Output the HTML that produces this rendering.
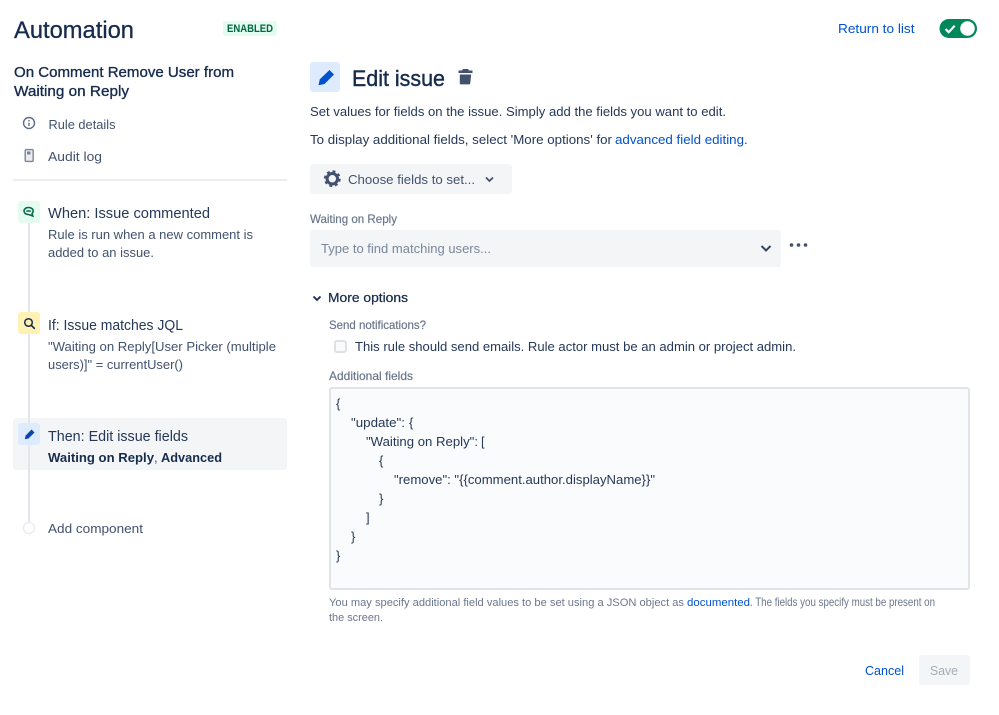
<!DOCTYPE html>
<html lang="en"><head><meta charset="utf-8"><title>Automation</title>
<style>
html,body{margin:0;padding:0;background:#fff}
svg{display:block}
text{font-family:"Liberation Sans",sans-serif;font-size:13px;fill:#253858;white-space:pre}
.h{fill:#172B4D}
.s{stroke:#172B4D;stroke-width:.35px}
.n{fill:#42526E}
.l{font-size:12px;fill:#6B778C;stroke:#6B778C;stroke-width:.2px}
.t{font-size:15px;fill:#253858}
.a{fill:#0052CC}
.c{fill:#253858}
.f{font-size:11px;fill:#6B778C}
</style></head>
<body>
<svg xmlns="http://www.w3.org/2000/svg" width="999" height="715" viewBox="0 0 999 715">
<rect width="999" height="715" fill="#fff"/>

<!-- Header -->
<text x="14" y="38" class="h" style="font-size:24px;stroke:#172B4D;stroke-width:.3px" textLength="120" lengthAdjust="spacingAndGlyphs">Automation</text>
<rect x="223" y="21" width="54" height="15" rx="3" fill="#E3FCEF"/>
<text x="227" y="32" style="font-size:11px;font-weight:bold;fill:#006644" textLength="46" lengthAdjust="spacingAndGlyphs">ENABLED</text>
<text x="14" y="77" class="h s" style="font-size:15px" textLength="220" lengthAdjust="spacingAndGlyphs">On Comment Remove User from</text>
<text x="14" y="96" class="h s" style="font-size:15px" textLength="115" lengthAdjust="spacingAndGlyphs">Waiting on Reply</text>

<!-- Sidebar links -->
<circle cx="29" cy="123" r="5.500" fill="none" stroke="#5E6C84" stroke-width="1.400"/>
<rect x="28.300" y="122.700" width="1.400" height="3.300" fill="#5E6C84"/><rect x="28.300" y="120" width="1.400" height="1.400" fill="#5E6C84"/>
<rect x="25.200" y="149.600" width="8" height="11.800" rx="1.200" fill="#EBECF0" stroke="#7A869A" stroke-width="1.400"/><rect x="27" y="151.500" width="3.500" height="3" fill="#7A869A"/>
<text x="48.500" y="129" class="n" textLength="67" lengthAdjust="spacingAndGlyphs">Rule details</text>
<text x="48" y="161" class="n" textLength="54" lengthAdjust="spacingAndGlyphs">Audit log</text>
<rect x="13" y="179" width="274" height="2" fill="#EBECF0"/>

<!-- Timeline -->
<rect x="13" y="418" width="274" height="52" rx="3" fill="#F4F5F7"/>
<rect x="28" y="223" width="2" height="300" fill="#E4E6EC"/>

<rect x="18" y="201" width="22" height="22" rx="3" fill="#E3FCEF"/>
<path d="M28.500 207.500c-2.700 0-4.500 1.500-4.500 3.500 0 2 1.800 3.500 4.500 3.500l4.300 1.500-.8-2.500c.8-.6 1.200-1.500 1.200-2.500 0-2-2-3.500-4.700-3.500z" fill="none" stroke="#006644" stroke-width="1.500"/>
<rect x="26.300" y="210.300" width="4.500" height="1.500" fill="#006644"/>
<text x="48" y="218" class="t" textLength="162" lengthAdjust="spacingAndGlyphs">When: Issue commented</text>
<text x="48" y="239" class="n" textLength="205" lengthAdjust="spacingAndGlyphs">Rule is run when a new comment is</text>
<text x="48" y="257" class="n" textLength="106" lengthAdjust="spacingAndGlyphs">added to an issue.</text>

<rect x="18" y="312" width="22" height="22" rx="3" fill="#FFF0B3"/>
<circle cx="28.500" cy="322.500" r="3.800" fill="none" stroke="#172B4D" stroke-width="1.500"/>
<path d="M31.300 325.300l3 3" stroke="#172B4D" stroke-width="1.700" stroke-linecap="round"/>
<text x="48" y="330" class="t" textLength="135" lengthAdjust="spacingAndGlyphs">If: Issue matches JQL</text>
<text x="48" y="351" class="n" textLength="228" lengthAdjust="spacingAndGlyphs">"Waiting on Reply[User Picker (multiple</text>
<text x="48" y="369" class="n" textLength="135" lengthAdjust="spacingAndGlyphs">users)]" = currentUser()</text>

<rect x="18" y="423" width="22" height="22" rx="3" fill="#DEEBFF"/>
<path d="M31.500 429.500l3 3-6 6-3.700.8.800-3.700z" fill="#0747A6"/>
<text x="48" y="441" class="t" textLength="140" lengthAdjust="spacingAndGlyphs">Then: Edit issue fields</text>
<text x="48" y="462" style="font-weight:bold;fill:#172B4D" textLength="106" lengthAdjust="spacingAndGlyphs">Waiting on Reply</text>
<text x="154" y="462" class="n">,</text>
<text x="161" y="462" style="font-weight:bold;fill:#172B4D" textLength="61" lengthAdjust="spacingAndGlyphs">Advanced</text>

<circle cx="29" cy="528" r="5.500" fill="#fff" stroke="#EBECF0" stroke-width="1.500"/>
<text x="48" y="533" class="n" textLength="95" lengthAdjust="spacingAndGlyphs">Add component</text>

<!-- Top right -->
<text x="838" y="33" class="a" textLength="76.500" lengthAdjust="spacingAndGlyphs">Return to list</text>
<rect x="939.500" y="19" width="37.500" height="19" rx="9.500" fill="#00875A"/>
<circle cx="967.500" cy="28.500" r="7.300" fill="#fff"/>
<path d="M945.500 29l3.200 3.200 6-6.500" fill="none" stroke="#fff" stroke-width="2.200"/>

<!-- Main heading -->
<rect x="310" y="62" width="30" height="30" rx="3" fill="#DEEBFF"/>
<path d="M329.500 70l4.500 4.500-9.500 9.500-6 1.300 1.300-6z" fill="#0052CC"/>
<text x="352" y="86" class="h" style="font-size:22px;stroke:#172B4D;stroke-width:.4px" textLength="93" lengthAdjust="spacingAndGlyphs">Edit issue</text>
<path d="M458.500 70.500h3.500l1-1.500h5l1 1.500h3.500v2.500h-14zM459.800 74.500h11.400l-1 9c-.1.600-.5.900-1 .9h-8.400c-.5 0-.9-.3-1-.9z" fill="#42526E"/>

<text x="310" y="116" class="c" textLength="416" lengthAdjust="spacingAndGlyphs">Set values for fields on the issue. Simply add the fields you want to edit.</text>
<text x="310" y="144" class="c" textLength="302" lengthAdjust="spacingAndGlyphs">To display additional fields, select 'More options' for</text>
<text x="615" y="144" class="a" textLength="129" lengthAdjust="spacingAndGlyphs">advanced field editing</text>
<text x="744" y="144" class="c">.</text>

<!-- Choose fields -->
<rect x="310" y="164" width="202" height="30" rx="3" fill="#F4F5F7"/>
<g transform="translate(332.300 178.700)" fill="none" stroke="#42526E">
<circle r="5.200" stroke-width="3"/>
<circle r="7.300" stroke-width="2.200" stroke-dasharray="2.900 2.830"/>
</g>
<text x="348" y="184" class="n" textLength="127" lengthAdjust="spacingAndGlyphs">Choose fields to set...</text>
<path d="M486 177.500l3.500 3.500 3.500-3.500" fill="none" stroke="#42526E" stroke-width="1.800"/>

<!-- Waiting on Reply -->
<text x="310" y="223" class="l" textLength="87" lengthAdjust="spacingAndGlyphs">Waiting on Reply</text>
<rect x="310" y="230" width="471" height="37" rx="3" fill="#F4F5F7"/>
<text x="321" y="253" style="fill:#7A869A" textLength="170" lengthAdjust="spacingAndGlyphs">Type to find matching users...</text>
<path d="M761.500 246l4.500 4.500 4.500-4.500" fill="none" stroke="#344563" stroke-width="2"/>
<circle cx="791.500" cy="245" r="1.800" fill="#42526E"/><circle cx="798.500" cy="245" r="1.800" fill="#42526E"/><circle cx="805.500" cy="245" r="1.800" fill="#42526E"/>

<!-- More options -->
<path d="M313.500 296.500l3.500 3.500 3.500-3.500" fill="none" stroke="#172B4D" stroke-width="1.800"/>
<text x="328" y="302" class="h s" style="stroke-width:.25px" textLength="80" lengthAdjust="spacingAndGlyphs">More options</text>
<text x="329" y="329" class="l" textLength="97" lengthAdjust="spacingAndGlyphs">Send notifications?</text>
<rect x="335" y="341" width="11" height="11" rx="2" fill="#FAFBFC" stroke="#DFE1E6" stroke-width="2"/>
<text x="355" y="351" class="c" textLength="441" lengthAdjust="spacingAndGlyphs">This rule should send emails. Rule actor must be an admin or project admin.</text>
<text x="329" y="380" class="l" textLength="84" lengthAdjust="spacingAndGlyphs">Additional fields</text>

<!-- Textarea -->
<rect x="330" y="388" width="639" height="201" rx="2" fill="#FAFBFC" stroke="#E1E3E8" stroke-width="2"/>
<text x="336" y="408" class="c">{</text>
<text x="351" y="427" class="c" textLength="54" lengthAdjust="spacingAndGlyphs">"update":</text><text x="409" y="427" class="c">{</text>
<text x="366" y="446" class="c" textLength="112" lengthAdjust="spacingAndGlyphs">"Waiting on Reply":</text><text x="481" y="446" class="c">[</text>
<text x="379" y="465" class="c">{</text>
<text x="394" y="484" class="c" textLength="261" lengthAdjust="spacingAndGlyphs">"remove": "{{comment.author.displayName}}"</text>
<text x="379" y="503" class="c">}</text>
<text x="366" y="522" class="c">]</text>
<text x="351" y="541" class="c">}</text>
<text x="336" y="560" class="c">}</text>

<!-- Help -->
<text x="329" y="606" class="f" textLength="355" lengthAdjust="spacingAndGlyphs">You may specify additional field values to be set using a JSON object as</text>
<text x="687" y="606" class="f" style="fill:#0052CC" textLength="63" lengthAdjust="spacingAndGlyphs">documented</text>
<text x="750" y="606" class="f" style="font-size:12px" textLength="185" lengthAdjust="spacingAndGlyphs">. The fields you specify must be present on</text>
<text x="329" y="621" class="f" textLength="54" lengthAdjust="spacingAndGlyphs">the screen.</text>

<!-- Footer -->
<text x="865" y="675" class="a" textLength="39" lengthAdjust="spacingAndGlyphs">Cancel</text>
<rect x="919" y="655" width="51" height="30" rx="3" fill="#F4F5F7"/>
<text x="930" y="675" style="fill:#A5ADBA" textLength="28" lengthAdjust="spacingAndGlyphs">Save</text>
</svg>
</body></html>
